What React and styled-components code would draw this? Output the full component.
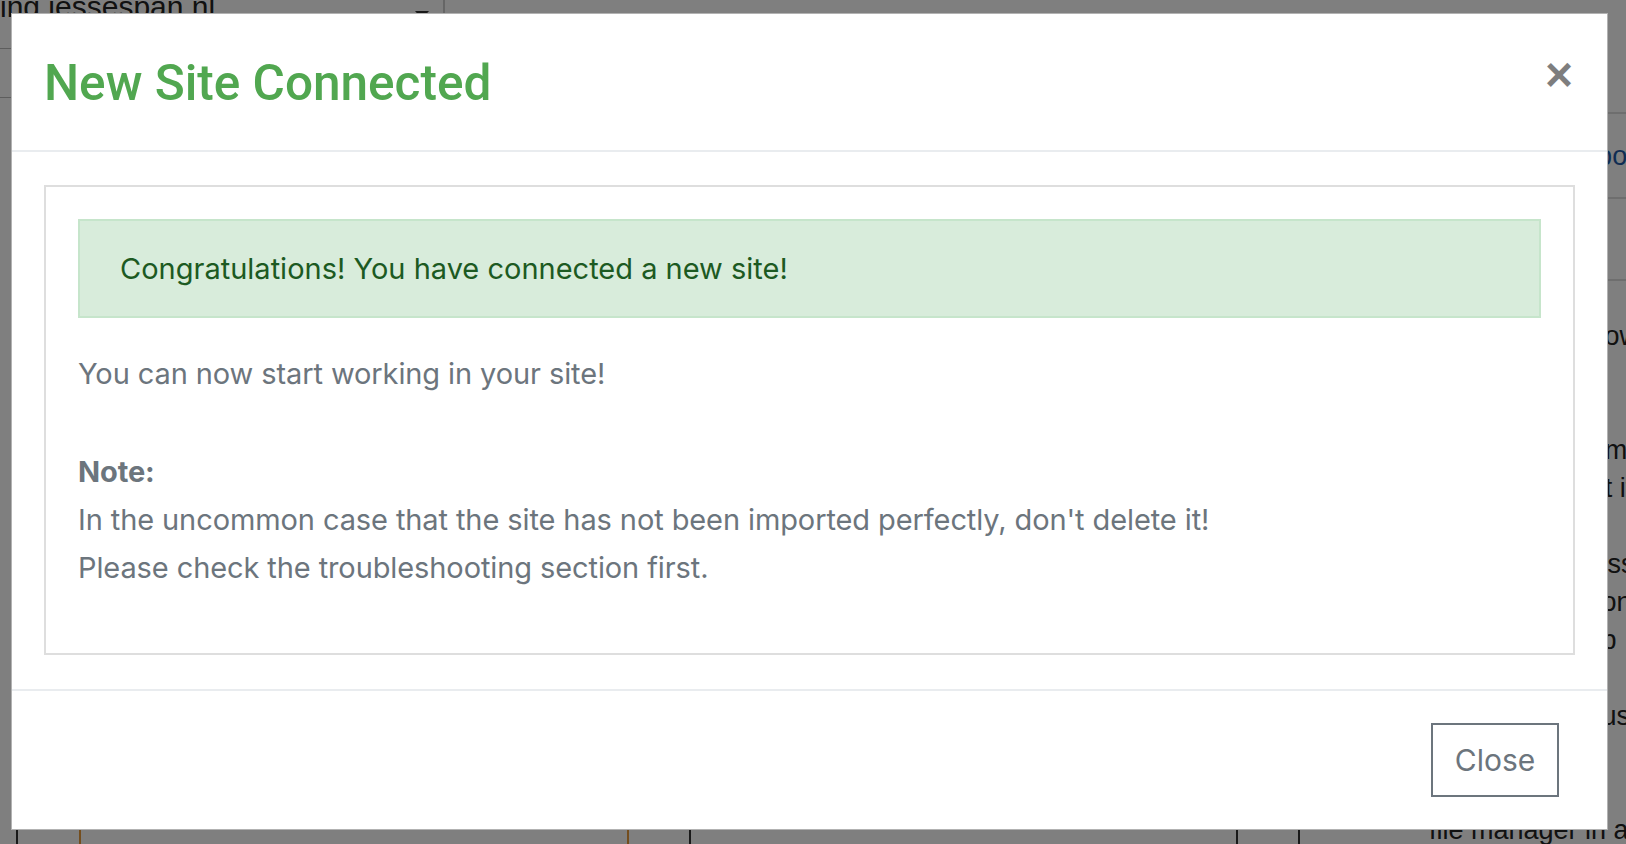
import React from 'react'
import styled, { createGlobalStyle } from 'styled-components'

const GlobalStyle = createGlobalStyle`
  html, body {
    margin: 0;
    padding: 0;
  }
  body {
    font-family: Inter, "Liberation Sans", Arial, sans-serif;
    background: #fff;
  }
`

// ---- page behind the dialog ----

const Screen = styled.div`
  position: relative;
  width: 1626px;
  height: 844px;
  overflow: hidden;
  background: #fff;
  font-family: "Liberation Sans", Arial, sans-serif;
  color: #222;
  display: flex;
  flex-direction: column;
`

const TopBar = styled.div`
  display: flex;
  height: 48px;
  border-bottom: 1px solid #bbb;
  flex-shrink: 0;
`

const SiteField = styled.div`
  width: 445px;
  display: flex;
  justify-content: space-between;
  align-items: flex-start;
  border-right: 2px solid #ccc;
  padding-right: 14px;
  box-sizing: border-box;
  overflow: hidden;
`

const SiteName = styled.span`
  font-size: 30px;
  line-height: 30px;
  margin-top: -8px;
`

const Caret = styled.span`
  width: 0;
  height: 0;
  margin-top: 11px;
  border-left: 7px solid transparent;
  border-right: 7px solid transparent;
  border-top: 8px solid #333;
`

const SubBar = styled.div`
  height: 48px;
  border-bottom: 1px solid #bbb;
  flex-shrink: 0;
`

const Main = styled.div`
  flex: 1;
  display: flex;
`

const Table = styled.div`
  flex: 1;
  display: flex;
`

const Col = styled.div`
  width: ${p => p.w}px;
  flex-shrink: 0;
  border-left: 2px solid ${p => p.line || 'transparent'};
  box-sizing: border-box;
`

const Sidebar = styled.div`
  width: 206px;
  display: flex;
  flex-direction: column;
  margin-top: -97px;
  background: #fff;
  font-size: 27px;
  line-height: 38px;
`

const SideBox = styled.div`
  height: ${p => p.h}px;
  border-bottom: 2px solid #ddd;
  display: flex;
  align-items: center;
  color: #1f5aa6;
  white-space: nowrap;
  flex-shrink: 0;
`

const SideText = styled.div`
  padding: 36px 0 0 9px;
  white-space: nowrap;
`

const SideLine = styled.div`
  height: 38px;
  font-weight: ${p => (p.bold ? 700 : 400)};
`

// ---- dialog ----

const Overlay = styled.div`
  position: absolute;
  inset: 0;
  background: rgba(0, 0, 0, 0.5);
  padding: 13px 0 0 11px;
`

const Modal = styled.div`
  width: 1597px;
  height: 817px;
  box-sizing: border-box;
  background: #fff;
  border: 1px solid rgba(0, 0, 0, 0.3);
  display: flex;
  flex-direction: column;
  font-family: Inter, "Liberation Sans", Arial, sans-serif;
`

const Header = styled.div`
  height: 138px;
  box-sizing: border-box;
  border-bottom: 2px solid #e9ecef;
  display: flex;
  align-items: center;
  justify-content: space-between;
  padding: 4px 34px 0 32px;
`

const Title = styled.h4`
  margin: 0;
  font-family: Roboto, "Liberation Sans", Arial, sans-serif;
  font-weight: 500;
  font-size: 49.5px;
  line-height: 1.2;
  color: #51a750;
`

const CloseX = styled.button`
  border: 0;
  background: none;
  padding: 0;
  margin-top: -18px;
  font-family: "Liberation Sans", Arial, sans-serif;
  font-weight: 700;
  font-size: 48px;
  line-height: 1;
  color: #000;
  opacity: 0.5;
  cursor: pointer;
`

const Body = styled.div`
  padding: 33px 32px 34px;
  border-bottom: 2px solid #e9ecef;
`

const Panel = styled.div`
  border: 2px solid #dedede;
  padding: 32px 32px 29px;
`

const Alert = styled.div`
  background: #d8ecdb;
  border: 2px solid #c6e5cb;
  color: #1c5a22;
  font-size: 29px;
  line-height: 47px;
  padding: 24px 40px;
  margin-bottom: 32px;
`

const Text = styled.p`
  margin: 0 0 ${p => p.gap}px;
  color: #6c757d;
  font-size: 29px;
  line-height: 48px;
  letter-spacing: -0.1px;
`

const Footer = styled.div`
  flex: 1;
  display: flex;
  align-items: center;
  justify-content: flex-end;
  padding-right: 48px;
`

const OutlineButton = styled.button`
  width: 128px;
  height: 74px;
  border: 2px solid #6c757d;
  background: #fff;
  color: #6c757d;
  font-family: Inter, "Liberation Sans", Arial, sans-serif;
  font-size: 30px;
  cursor: pointer;
`

const cols = [
  { w: 16 },
  { w: 63, line: '#333' },
  { w: 548, line: '#e89a3a' },
  { w: 62, line: '#e89a3a' },
  { w: 547, line: '#333' },
  { w: 62, line: '#333' },
  { w: 122, line: '#333' },
]

const sideLines = [
  { t: 'Use this workflow' },
  { t: '' },
  { t: 'Attention A', bold: true },
  { t: 'To continue admin' },
  { t: 'and how to edit it' },
  { t: '' },
  { t: 'See the progress log' },
  { t: 'More information' },
  { t: 'Use the last tab' },
  { t: 'Do not forget', bold: true },
  { t: 'Check the status' },
  { t: 'Make sure you' },
  { t: 'can go back' },
  { t: 'file manager in a m' },
]

export default function App() {
  return (
    <>
      <GlobalStyle />
      <Screen>
        <TopBar>
          <SiteField>
            <SiteName>ing.jessespan.nl</SiteName>
            <Caret />
          </SiteField>
        </TopBar>
        <SubBar />
        <Main>
          <Table>
            {cols.map((c, i) => (
              <Col key={i} w={c.w} line={c.line} />
            ))}
          </Table>
          <Sidebar>
            <SideBox h={111} />
            <SideBox h={83}>Go to the dashboard</SideBox>
            <SideBox h={80} />
            <SideText>
              {sideLines.map((l, i) => (
                <SideLine key={i} bold={l.bold}>{l.t}</SideLine>
              ))}
            </SideText>
          </Sidebar>
        </Main>

        <Overlay>
          <Modal role="dialog">
            <Header>
              <Title>New Site Connected</Title>
              <CloseX aria-label="Close">×</CloseX>
            </Header>
            <Body>
              <Panel>
                <Alert>Congratulations! You have connected a new site!</Alert>
                <Text gap={50}>You can now start working in your site!</Text>
                <Text gap={32}>
                  <strong>Note:</strong>
                  <br />
                  In the uncommon case that the site has not been imported perfectly, don't delete it!
                  <br />
                  Please check the troubleshooting section first.
                </Text>
              </Panel>
            </Body>
            <Footer>
              <OutlineButton>Close</OutlineButton>
            </Footer>
          </Modal>
        </Overlay>
      </Screen>
    </>
  )
}
